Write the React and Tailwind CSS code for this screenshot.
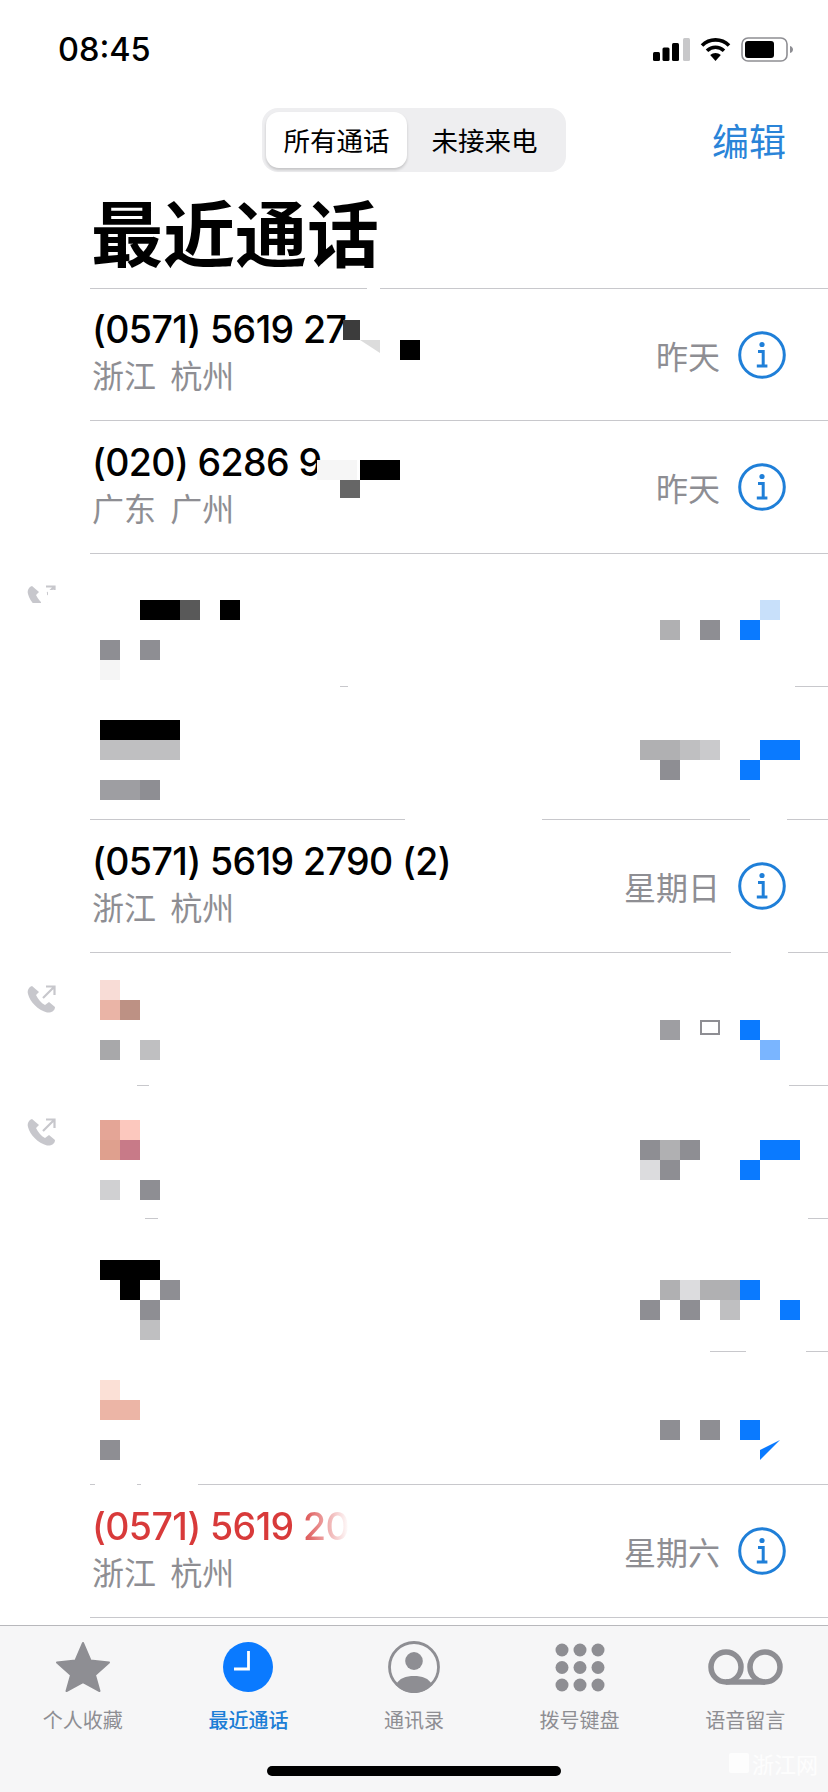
import React from "react";

const P = {
  k: "bg-black", 5: "bg-[#595959]", g: "bg-[#8e8e93]", h: "bg-[#b0b0b2]", c: "bg-[#bfbfc1]", C: "bg-[#cacacc]",
  l: "bg-[#dcdcde]", f: "bg-[#f5f5f5]", s: "bg-[#9e9ea2]", y: "bg-[#a8a8aa]", t: "bg-[#d0d0d2]",
  B: "bg-[#0a7aff]", L: "bg-[#c8e0fa]", M: "bg-[#7ab5ff]",
  a: "bg-[#f8dcd6]", d: "bg-[#eab4a6]", e: "bg-[#bd9184]", i: "bg-[#e4a596]", j: "bg-[#fcc8be]",
  m: "bg-[#dfa08e]", n: "bg-[#c87a88]", o: "bg-[#fbe0d6]", q: "bg-[#ecb5a6]",
  z: "h-[15px] border-2 border-[#8e8e93]",
  T: "bg-[#0a7aff] [clip-path:polygon(0_50%,100%_0,0_100%)]",
};

function Mosaic({ rows, className }) {
  return (
    <div className={"flex flex-col " + className}>
      {rows.map((r, ri) => (
        <div key={ri} className="flex h-5">
          {r.split("").map((c, ci) => (
            <div key={ci} className={"w-5 h-5 shrink-0 " + (P[c] || "")} />
          ))}
        </div>
      ))}
    </div>
  );
}

function Sep({ segs }) {
  return (
    <div className="flex h-px shrink-0">
      {segs.map((s, i) => (
        <div key={i} className={"bg-[#c8c8cc] h-px " + s} />
      ))}
    </div>
  );
}

function Info() {
  return (
    <svg width="48" height="48" viewBox="0 0 48 48" className="shrink-0">
      <circle cx="24" cy="24" r="22.3" fill="none" stroke="#1f7fd8" strokeWidth="3" />
      <circle cx="24" cy="13.5" r="2.6" fill="#1f7fd8" />
      <path d="M20 20.5h5.2v14.2 M18.8 35h10.6" fill="none" stroke="#1f7fd8" strokeWidth="3" />
    </svg>
  );
}

function CallIcon({ top, erased }) {
  return (
    <svg width="29" height="28" viewBox="0 0 29 28" className={"absolute left-[-63px] " + top}>
      <path d="M5 1C2 2 0 5 1 9c2 8 10 16 19 18.500 4 .5 8-1.500 8-5.500l-6-5-4 3c-4-2-7-6-9-10l3-3z" fill="#c7c7cc" />
      <path d="M19 1.500h8.500V10M27.500 1.500 16 13" fill="none" stroke="#c7c7cc" strokeWidth="2.200" />
      {erased && <path d="M0 18h29v10H0zM14 8h6v10h-6zM21 5h8v13h-8z" fill="#fff" />}
    </svg>
  );
}

function PhoneRow({ segs, title, sub, day, h = "h-[133px]", extra }) {
  return (
    <div className={"flex flex-col shrink-0 " + h}>
      <Sep segs={segs} />
      <div className="relative flex flex-1 items-center pr-[42px]">
        <div className="flex flex-col pl-[2px] mt-[-6px]">
          <div className="text-[37.500px] leading-[46px] font-medium text-black h-[46px] tracking-[-0.6px] font-['Inter',sans-serif]">
            {title}
          </div>
          <div className="text-[32px] leading-[44px] mt-[-1px] text-[#8e8e93] [word-spacing:7px]">{sub}</div>
        </div>
        <div className="ml-auto text-[32px] leading-[40px] text-[#8e8e93] mr-[18px]">{day}</div>
        <Info />
        {extra}
      </div>
    </div>
  );
}

function MosaicRow({ segs, left, right, lt, rt, icon }) {
  return (
    <div className="flex flex-col shrink-0 h-[133px]">
      <Sep segs={segs} />
      <div className="relative flex flex-1 items-start pr-[28px]">
        {icon}
        <Mosaic rows={left} className={"ml-[10px] " + lt} />
        <Mosaic rows={right} className={"ml-auto " + rt} />
      </div>
    </div>
  );
}

function Tab({ label, active, children }) {
  return (
    <div className="flex flex-col items-center">
      <div className="h-[64px] flex items-center justify-center">{children}</div>
      <div className={"text-[20px] leading-[26px] mt-[8px] " + (active ? "text-[#1c7ed6] font-medium" : "text-[#8e8e93]")}>
        {label}
      </div>
    </div>
  );
}

export default function App() {
  return (
    <div className="relative w-[828px] h-[1792px] bg-white overflow-hidden flex flex-col font-['Noto_Sans_CJK_SC','Noto_Sans',sans-serif]">
      {/* status bar */}
      <div className="h-[108px] shrink-0 flex items-start justify-between pl-[58px] pr-[34px] pt-[32px]">
        <div className="text-[32.500px] leading-[36px] font-medium text-black font-['Inter',sans-serif]">08:45</div>
        <div className="flex items-center gap-[10px] mt-[5px]">
          <svg width="37" height="23" viewBox="0 0 37 23">
            <rect x="0" y="14" width="7" height="9" rx="1.500" fill="#000" />
            <rect x="9.500" y="9.500" width="7" height="13.500" rx="1.500" fill="#000" />
            <rect x="19" y="5" width="7" height="18" rx="1.500" fill="#000" />
            <rect x="30" y="0" width="7" height="23" rx="1.500" fill="#c8c8ca" />
          </svg>
          <svg width="31" height="23" viewBox="0 0 31 23">
            <path d="M2 7.500C9.500 0 21.500 0 29 7.500" fill="none" stroke="#000" strokeWidth="3.600" />
            <path d="M7 12.800c5-4.800 12-4.800 17 0" fill="none" stroke="#000" strokeWidth="3.600" />
            <path d="M15.500 23l-5.300-6c3-2.800 7.600-2.800 10.600 0z" fill="#000" />
          </svg>
          <svg width="53" height="25" viewBox="0 0 53 25">
            <rect x="1" y="1" width="45" height="23" rx="6" fill="none" stroke="#8e8e93" strokeWidth="1.600" />
            <rect x="4" y="4" width="29" height="17" rx="3" fill="#000" />
            <path d="M49 9c2 .5 3 2 3 3.500s-1 3-3 3.500z" fill="#8e8e93" />
          </svg>
        </div>
      </div>

      {/* nav */}
      <div className="h-[64px] shrink-0 grid grid-cols-[1fr_304px_1fr] items-center">
        <div />
        <div className="h-[64px] rounded-[16px] bg-[#eeeef0] p-[4px] flex items-start">
          <div className="w-[141px] h-[56px] rounded-[13px] bg-white shadow-[0_2px_3px_rgba(0,0,0,0.18)] flex items-center justify-center text-[26.500px] text-black">
            所有通话
          </div>
          <div className="flex-1 h-[56px] flex items-center justify-center text-[26.500px] text-black">未接来电</div>
        </div>
        <div className="text-right pr-[42px] text-[37px] leading-[44px] text-[#2a84d8]">编辑</div>
      </div>

      {/* title */}
      <div className="h-[116px] shrink-0 flex items-center pl-[91px] text-[72px] leading-none font-bold text-black">
        最近通话
      </div>

      {/* list */}
      <div className="flex flex-col pl-[90px]">
        <PhoneRow
          h="h-[132px]"
          segs={["w-[277px]", "ml-[13px] flex-1"]}
          title="(0571) 5619 27"
          sub="浙江 杭州"
          day="昨天"
          extra={
            <>
              <div className="absolute left-[253px] top-[31px] w-[20px] h-[20px] bg-[#3c3c3c]" />
              <div className="absolute left-[270px] top-[31px] w-[20px] h-[20px] bg-white" />
              <div className="absolute left-[270px] top-[51px] w-[20px] h-[13px] bg-[#dcdcdc] [clip-path:polygon(0_0,100%_0,100%_100%)]" />
              <div className="absolute left-[310px] top-[51px] w-[20px] h-[20px] bg-black" />
            </>
          }
        />
        <PhoneRow
          segs={["flex-1"]}
          title="(020) 6286 9"
          sub="广东 广州"
          day="昨天"
          extra={
            <>
              <div className="absolute left-[227px] top-[39px] w-[40px] h-[20px] bg-[#f6f6f6]" />
              <div className="absolute left-[270px] top-[39px] w-[40px] h-[20px] bg-black" />
              <div className="absolute left-[250px] top-[59px] w-[20px] h-[18px] bg-[#666666]" />
            </>
          }
        />
        <MosaicRow
          segs={["flex-1"]}
          lt="mt-[46px]"
          rt="mt-[46px]"
          icon={<CallIcon top="top-[31px]" erased />}
          left={["..kk5.k", ".......", "g.g....", "f......"]}
          right={["......L.", ".h.g.B.."]}
        />
        <MosaicRow
          segs={["ml-[250px] w-[8px]", "ml-[447px] flex-1"]}
          lt="mt-[33px]"
          rt="mt-[53px]"
          left={["kkkk", "cccc", "....", "ssg."]}
          right={["hhcC..BB", ".g...B.."]}
        />
        <PhoneRow
          segs={["w-[315px]", "ml-[137px] w-[208px]", "ml-[37px] flex-1"]}
          title="(0571) 5619 2790 (2)"
          sub="浙江 杭州"
          day="星期日"
        />
        <MosaicRow
          segs={["w-[641px]", "ml-[57px] flex-1"]}
          lt="mt-[27px]"
          rt="mt-[67px]"
          icon={<CallIcon top="top-[32px]" />}
          left={["a...", "de..", "....", "y.c."]}
          right={[".s.z.B..", "......M."]}
        />
        <MosaicRow
          segs={["ml-[47px] w-[12px]", "ml-[640px] flex-1"]}
          lt="mt-[34px]"
          rt="mt-[54px]"
          icon={<CallIcon top="top-[32px]" />}
          left={["ij", "mn", "..", "t.g"]}
          right={["ghg...BB", "lg...B.."]}
        />
        <MosaicRow
          segs={["ml-[55px] w-[13px]", "ml-[650px] flex-1"]}
          lt="mt-[41px]"
          rt="mt-[61px]"
          left={["kkk.", ".k.g", "..g.", "..c."]}
          right={[".hlhhB..", "g.g.c..B"]}
        />
        <MosaicRow
          segs={["ml-[620px] w-[36px]", "ml-[60px] flex-1"]}
          lt="mt-[28px]"
          rt="mt-[68px]"
          left={["o.", "qq", "..", "g."]}
          right={[".g.g.B..", "......T."]}
        />
        <PhoneRow
          segs={["w-[5px]", "ml-[42px] w-[4px]", "ml-[57px] flex-1"]}
          title={
            <span className="inline-block bg-[linear-gradient(90deg,#d83a3a_0,#d83a3a_80%,transparent_100%)] bg-clip-text text-transparent">
              (0571) 5619 20
            </span>
          }
          sub="浙江 杭州"
          day="星期六"
        />
        <Sep segs={["flex-1"]} />
      </div>

      {/* tab bar */}
      <div className="relative mt-auto h-[167px] shrink-0 bg-[#f6f6f7] border-t border-[#b8b8bc]">
        <div className="grid grid-cols-5 pt-[9px]">
          <Tab label="个人收藏">
            <svg width="56" height="52" viewBox="0 0 56 52">
              <path d="M28 2l7.500 17.500L54 21.500 40 34l4.500 16L28 41 11.500 50 16 34 2 21.500l18.500-2z" fill="#8e8e93" stroke="#8e8e93" strokeWidth="2" strokeLinejoin="round" />
            </svg>
          </Tab>
          <Tab label="最近通话" active>
            <svg width="50" height="50" viewBox="0 0 50 50">
              <circle cx="25" cy="25" r="25" fill="#0a7aff" />
              <path d="M25.500 9v18H11" fill="none" stroke="#fff" strokeWidth="2.800" />
            </svg>
          </Tab>
          <Tab label="通讯录">
            <svg width="52" height="52" viewBox="0 0 52 52">
              <circle cx="26" cy="26" r="24.500" fill="none" stroke="#8e8e93" strokeWidth="2.800" />
              <ellipse cx="26" cy="20" rx="8.800" ry="9" fill="#8e8e93" />
              <path d="M8 44c3-7 10-9 18-9s15 2 18 9a24 24 0 0 1-36 0z" fill="#8e8e93" />
            </svg>
          </Tab>
          <Tab label="拨号键盘">
            <svg width="50" height="49" viewBox="0 0 50 49" fill="#8e8e93">
              <circle cx="7" cy="7" r="6.500" /><circle cx="25" cy="7" r="6.500" /><circle cx="43" cy="7" r="6.500" />
              <circle cx="7" cy="24.500" r="6.500" /><circle cx="25" cy="24.500" r="6.500" /><circle cx="43" cy="24.500" r="6.500" />
              <circle cx="7" cy="42" r="6.500" /><circle cx="25" cy="42" r="6.500" /><circle cx="43" cy="42" r="6.500" />
            </svg>
          </Tab>
          <Tab label="语音留言">
            <svg width="75" height="36" viewBox="0 0 75 36" fill="none" stroke="#8e8e93" strokeWidth="5.500">
              <circle cx="18" cy="18" r="15" />
              <circle cx="57" cy="18" r="15" />
              <path d="M18 33h39" />
            </svg>
          </Tab>
        </div>
        <div className="absolute left-[267px] bottom-[16px] w-[294px] h-[10px] rounded-full bg-black" />
        <div className="absolute left-[729px] bottom-[18px] flex items-center gap-[3px] text-[22px] leading-[22px] text-white/80">
          <div className="w-[20px] h-[20px] bg-white/80 rounded-[2px]" />
          浙江网
        </div>
      </div>
    </div>
  );
}
